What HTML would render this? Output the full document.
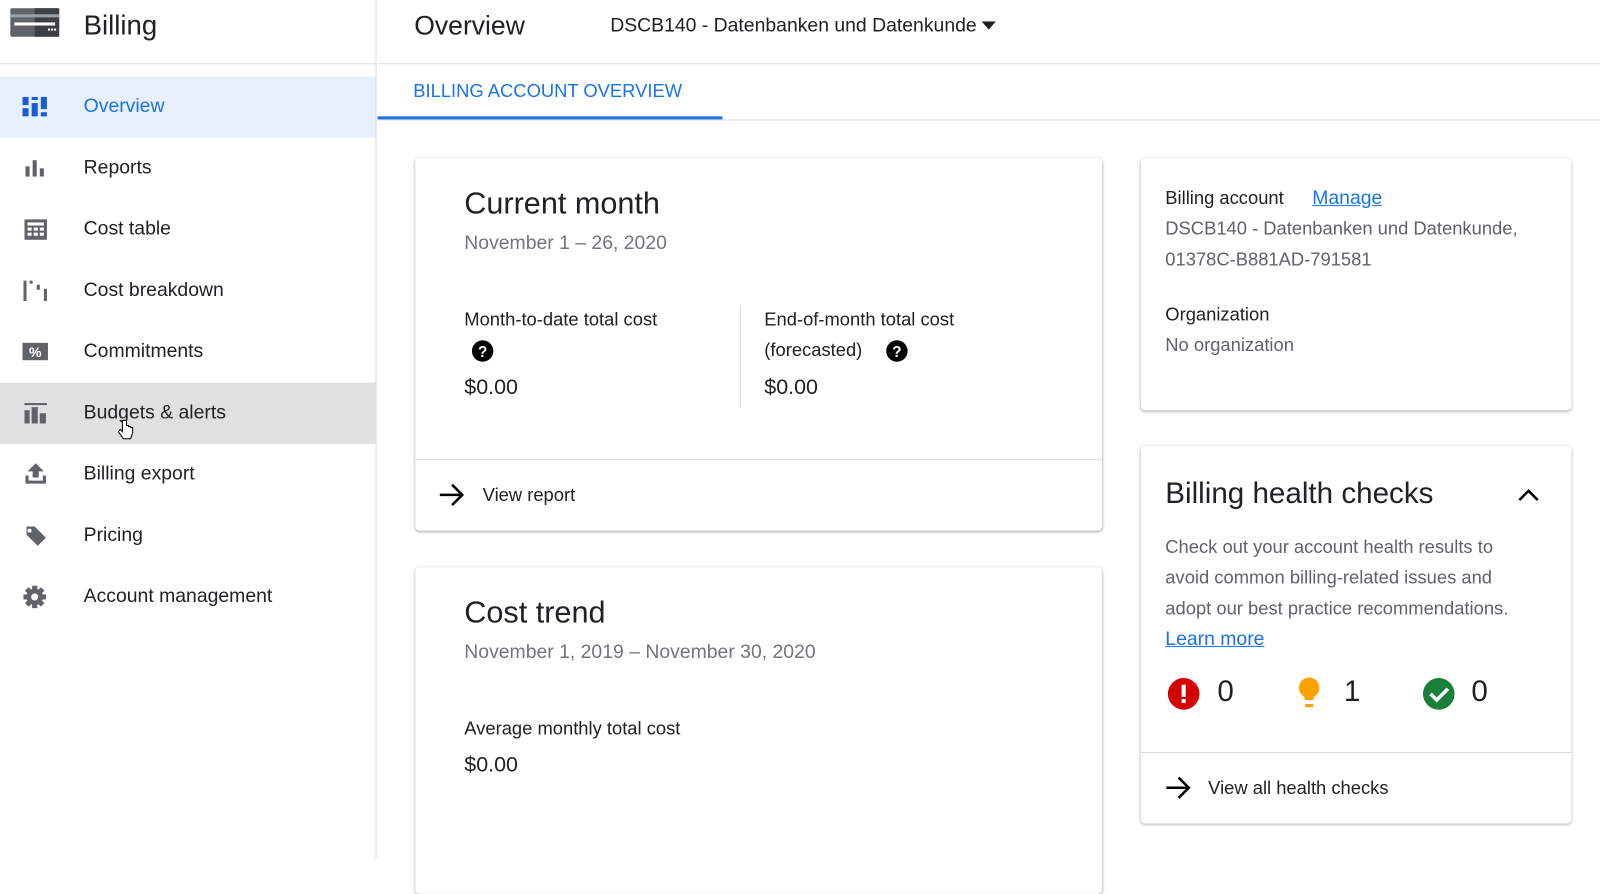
<!DOCTYPE html><html><head><style>
*{box-sizing:border-box;margin:0;padding:0}
body{width:1600px;height:841px;overflow:hidden;background:#fff;font-family:"Liberation Sans",Roboto,sans-serif;color:#202124;position:relative}
#w{position:absolute;left:0;top:0;width:1568px;height:825px;transform:scale(1.0204);transform-origin:0 0}
.a{position:absolute}
.side{left:0;top:0;width:369px;height:841px;border-right:1px solid #dadce0}
.nav{position:absolute;left:0;width:368px;height:60px;font-size:19px;color:#202124}
.nav span{position:absolute;left:82px;top:19px}
.nav svg{position:absolute;left:22px;top:18px}
.card{position:absolute;background:#fff;border-radius:4px;box-shadow:0 1px 3px rgba(60,64,67,.3),0 1px 2px rgba(60,64,67,.15)}
.t{position:absolute;white-space:nowrap}
</style></head><body><div id="w">
<div class="a side">
<div class="a" style="left:0;top:62px;width:368px;border-top:1px solid #dadce0"></div>
<svg class="a" style="left:10px;top:8px" width="50" height="29"><rect width="48" height="28" rx="2" fill="#5f6368"/><rect x="24" width="24" height="28" fill="#3c4043"/><rect y="6" width="48" height="3" fill="#9aa0a6"/><rect x="4" y="14" width="40" height="3" fill="#fff"/><rect x="37" y="20" width="2" height="2" fill="#fff"/><rect x="40" y="20" width="2" height="2" fill="#fff"/><rect x="43" y="20" width="2" height="2" fill="#fff"/></svg>
<div class="t" style="left:82px;top:10px;font-size:27px">Billing</div>
<div class="nav" style="top:75px;background:#e8f0fe;color:#1a73e8"><svg width="26" height="24"><g fill="#1a5cd8"><rect x="0" y="2" width="6" height="8"/><rect x="0" y="13" width="6" height="8"/><rect x="9" y="2" width="6" height="3"/><rect x="9" y="8" width="6" height="13"/><rect x="18" y="2" width="6" height="12"/><rect x="18" y="17" width="6" height="4"/></g></svg><span>Overview</span></div>
<div class="nav" style="top:135px"><svg width="26" height="24"><g fill="#5f6368"><rect x="3" y="10" width="4" height="10"/><rect x="10" y="4" width="4" height="16"/><rect x="17" y="12" width="4" height="8"/></g></svg><span>Reports</span></div>
<div class="nav" style="top:195px"><svg width="26" height="24"><rect x="2" y="2" width="22" height="20" fill="#5f6368"/><g fill="#fff"><rect x="5" y="5" width="16" height="3"/><rect x="5" y="10" width="4" height="3"/><rect x="11" y="10" width="4" height="3"/><rect x="17" y="10" width="4" height="3"/><rect x="5" y="15" width="4" height="3"/><rect x="11" y="15" width="4" height="3"/><rect x="17" y="15" width="4" height="3"/></g></svg><span>Cost table</span></div>
<div class="nav" style="top:255px"><svg width="28" height="24"><g fill="#5f6368"><rect x="1" y="2" width="3" height="20"/><rect x="7" y="2" width="3" height="3"/><rect x="14" y="6" width="3" height="5"/><rect x="21" y="10" width="3" height="12"/></g></svg><span>Cost breakdown</span></div>
<div class="nav" style="top:315px"><svg width="26" height="24"><rect x="0" y="3" width="25" height="17" fill="#5f6368"/><text x="12.5" y="17" fill="#fff" font-size="14" font-weight="bold" text-anchor="middle" font-family="Liberation Sans">%</text></svg><span>Commitments</span></div>
<div class="nav" style="top:375px;background:#e0e0e0"><svg width="26" height="24"><g fill="#5f6368"><rect x="2" y="2" width="22" height="2"/><rect x="2" y="9" width="5" height="13"/><rect x="9" y="6" width="6" height="16"/><rect x="17" y="12" width="6" height="10"/></g></svg><span>Budgets &amp; alerts</span></div>
<div class="nav" style="top:435px"><svg width="26" height="24"><g fill="#5f6368"><path d="M13 1 5 9h5v6h6V9h5z"/><path d="M3 13h3v5h14v-5h3v8H3z"/></g></svg><span>Billing export</span></div>
<div class="nav" style="top:495px"><svg width="26" height="24"><path fill="#5f6368" d="M2 3h10l11 11-8 8L4 11V3z"/><circle cx="7" cy="7" r="2" fill="#fff"/></svg><span>Pricing</span></div>
<div class="nav" style="top:555px"><svg width="26" height="26"><g transform="translate(12 12)" fill="#5f6368"><circle r="8"/><g><rect x="-2.5" y="-11" width="5" height="22"/><rect x="-2.5" y="-11" width="5" height="22" transform="rotate(45)"/><rect x="-2.5" y="-11" width="5" height="22" transform="rotate(90)"/><rect x="-2.5" y="-11" width="5" height="22" transform="rotate(135)"/></g><circle r="3.5" fill="#fff"/></g></svg><span>Account management</span></div>
<svg class="a" style="left:115px;top:410px" width="16" height="22"><path d="M5 2v11l-2-2-2 2 5 7h7l2-6v-5h-2v-1h-2v-1h-2V2z" fill="#fff" stroke="#000" stroke-width="1"/></svg>
</div>
<div class="a" style="left:370px;top:62px;width:1230px;border-top:1px solid #dadce0"></div>
<div class="t" style="left:406px;top:10px;font-size:26px">Overview</div>
<div class="t" style="left:598px;top:15px;font-size:19px">DSCB140 - Datenbanken und Datenkunde</div>
<svg class="a" style="left:962px;top:21px" width="14" height="8"><path d="M0 0h14L7 8z" fill="#202124"/></svg>
<div class="a" style="left:370px;top:117px;width:1230px;border-top:1px solid #dadce0"></div>
<div class="t" style="left:405px;top:79px;font-size:18px;color:#1a73e8;font-weight:500">BILLING ACCOUNT OVERVIEW</div>
<div class="a" style="left:370px;top:114px;width:338px;height:3px;background:#1a73e8"></div>

<div class="card" style="left:407px;top:155px;width:673px;height:365px">
<div class="t" style="left:48px;top:28px;font-size:30px">Current month</div>
<div class="t" style="left:48px;top:73px;font-size:19px;color:#70757a">November 1 – 26, 2020</div>
<div class="t" style="left:48px;top:148px;font-size:18px">Month-to-date total cost</div>
<svg class="a" style="left:55px;top:178px" width="22" height="22"><circle cx="11" cy="11" r="10.5" fill="#000"/><text x="11" y="17" fill="#fff" font-size="15" font-weight="bold" text-anchor="middle" font-family="Liberation Sans">?</text></svg>
<div class="t" style="left:48px;top:213px;font-size:21px">$0.00</div>
<div class="a" style="left:318px;top:145px;height:100px;border-left:1px solid #dadce0"></div>
<div class="t" style="left:342px;top:148px;font-size:18px">End-of-month total cost</div>
<div class="t" style="left:342px;top:178px;font-size:18px">(forecasted)</div>
<svg class="a" style="left:461px;top:178px" width="22" height="22"><circle cx="11" cy="11" r="10.5" fill="#000"/><text x="11" y="17" fill="#fff" font-size="15" font-weight="bold" text-anchor="middle" font-family="Liberation Sans">?</text></svg>
<div class="t" style="left:342px;top:213px;font-size:21px">$0.00</div>
<div class="a" style="left:0;top:295px;width:673px;border-top:1px solid #dadce0"></div>
<svg class="a" style="left:23px;top:318px" width="26" height="24"><path d="M1 12h22M13 2l10 10-10 10" stroke="#000" stroke-width="2.5" fill="none"/></svg>
<div class="t" style="left:66px;top:320px;font-size:18px">View report</div>
</div>

<div class="card" style="left:407px;top:556px;width:673px;height:320px">
<div class="t" style="left:48px;top:28px;font-size:30px">Cost trend</div>
<div class="t" style="left:48px;top:73px;font-size:19px;color:#70757a">November 1, 2019 – November 30, 2020</div>
<div class="t" style="left:48px;top:148px;font-size:18px">Average monthly total cost</div>
<div class="t" style="left:48px;top:182px;font-size:21px">$0.00</div>
</div>

<div class="card" style="left:1118px;top:155px;width:422px;height:247px">
<div class="t" style="left:24px;top:29px;font-size:18px">Billing account</div>
<div class="t" style="left:168px;top:29px;font-size:19px;color:#1a73e8;text-decoration:underline">Manage</div>
<div class="t" style="left:24px;top:54px;font-size:18px;color:#5f6368;line-height:30px">DSCB140 - Datenbanken und Datenkunde,<br>01378C-B881AD-791581</div>
<div class="t" style="left:24px;top:143px;font-size:18px">Organization</div>
<div class="t" style="left:24px;top:173px;font-size:18px;color:#5f6368">No organization</div>
</div>

<div class="card" style="left:1118px;top:437px;width:422px;height:370px">
<div class="t" style="left:24px;top:31px;font-size:29px">Billing health checks</div>
<svg class="a" style="left:370px;top:42px" width="20" height="13"><path d="M1 11l9-9 9 9" stroke="#000" stroke-width="2.5" fill="none"/></svg>
<div class="t" style="left:24px;top:84px;font-size:18px;color:#5f6368;line-height:30px">Check out your account health results to<br>avoid common billing-related issues and<br>adopt our best practice recommendations.</div>
<div class="t" style="left:24px;top:179px;font-size:19px;color:#1a73e8;text-decoration:underline">Learn more</div>
<svg class="a" style="left:26px;top:227px" width="32" height="32"><circle cx="16" cy="16" r="15.5" fill="#d50000"/><rect x="14" y="7" width="4" height="12" fill="#fff"/><rect x="14" y="21" width="4" height="4" fill="#fff"/></svg>
<div class="t" style="left:75px;top:225px;font-size:29px">0</div>
<svg class="a" style="left:154px;top:227px" width="24" height="32"><circle cx="11" cy="10" r="10" fill="#ffa000"/><path d="M5 14h12l-2 8H7z" fill="#ffa000"/><rect x="7" y="26" width="8" height="3" fill="#ffa000"/></svg>
<div class="t" style="left:199px;top:225px;font-size:29px">1</div>
<svg class="a" style="left:276px;top:227px" width="32" height="32"><circle cx="16" cy="16" r="15.5" fill="#188038"/><path d="M8 16l6 6 11-11" stroke="#fff" stroke-width="3.5" fill="none"/></svg>
<div class="t" style="left:324px;top:225px;font-size:29px">0</div>
<div class="a" style="left:0;top:300px;width:422px;border-top:1px solid #dadce0"></div>
<svg class="a" style="left:24px;top:323px" width="26" height="24"><path d="M1 12h22M13 2l10 10-10 10" stroke="#000" stroke-width="2.5" fill="none"/></svg>
<div class="t" style="left:66px;top:325px;font-size:18px">View all health checks</div>
</div>
</div></body></html>
